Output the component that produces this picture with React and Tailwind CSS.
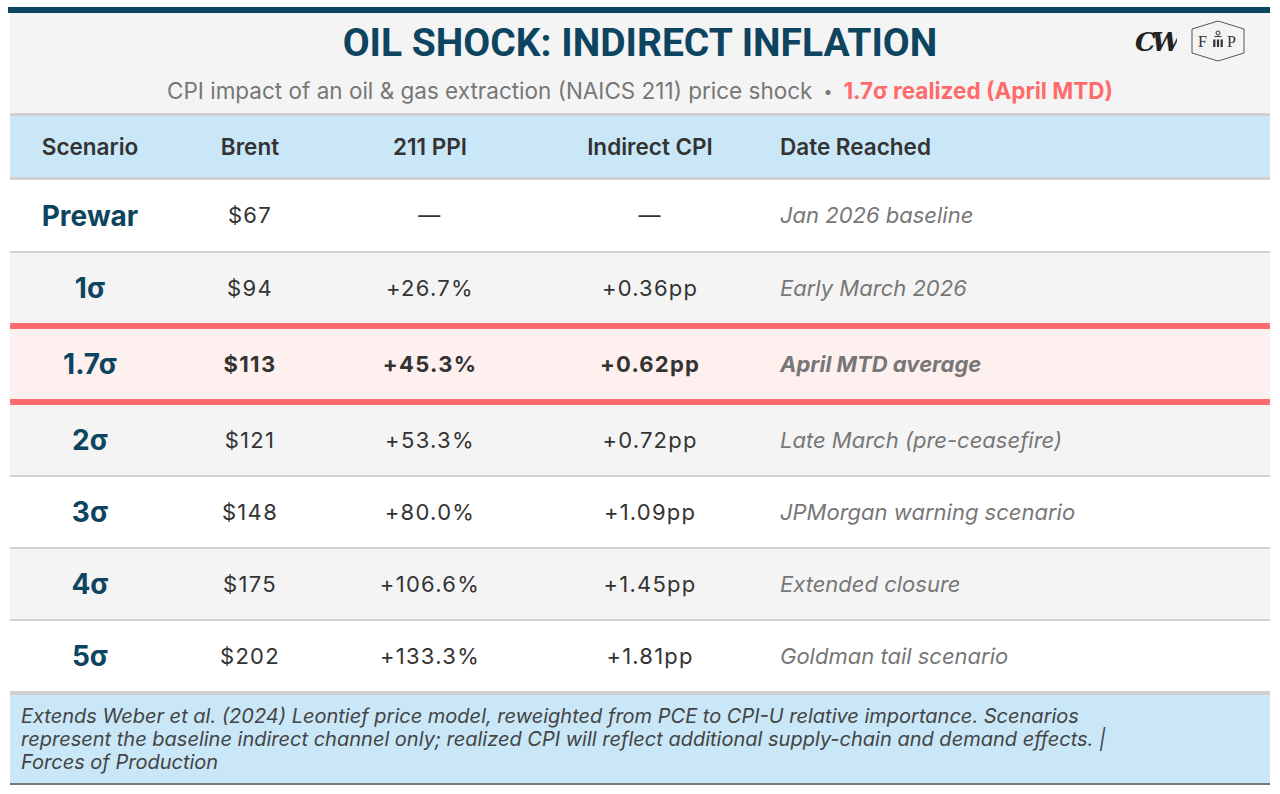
import React from 'react'

const rows = [
  { s: 'Prewar', b: '$67', p: '—', c: '—', d: 'Jan 2026 baseline', box: 'h-[73px] bg-white border-b-2 border-[#d0d0d0]' },
  { s: '1σ', b: '$94', p: '+26.7%', c: '+0.36pp', d: 'Early March 2026', box: 'h-[70px] bg-[#f4f4f4]' },
  { s: '1.7σ', b: '$113', p: '+45.3%', c: '+0.62pp', d: 'April MTD average', box: 'h-[82px] bg-[#fff0f0] border-y-[6px] border-[#ff6b6b] font-bold' },
  { s: '2σ', b: '$121', p: '+53.3%', c: '+0.72pp', d: 'Late March (pre-ceasefire)', box: 'h-[72px] bg-[#f4f4f4] border-b-2 border-[#d0d0d0]' },
  { s: '3σ', b: '$148', p: '+80.0%', c: '+1.09pp', d: 'JPMorgan warning scenario', box: 'h-[72px] bg-white border-b-2 border-[#d0d0d0]' },
  { s: '4σ', b: '$175', p: '+106.6%', c: '+1.45pp', d: 'Extended closure', box: 'h-[72px] bg-[#f4f4f4] border-b-2 border-[#d0d0d0]' },
  { s: '5σ', b: '$202', p: '+133.3%', c: '+1.81pp', d: 'Goldman tail scenario', box: 'h-[70px] bg-white' },
]

const cols = 'grid grid-cols-[160px_160px_200px_240px_1fr] items-center'

const CwLogo = () => (
  <svg width="42" height="30" viewBox="0 0 42 30">
    <text x="0" y="25" fontFamily="'DejaVu Serif', serif" fontWeight="900" fontStyle="italic" fontSize="26" fill="#222" letterSpacing="-4">CW</text>
  </svg>
)

const FopLogo = () => (
  <svg width="56" height="42" viewBox="0 0 56 42">
    <polygon points="2,9 28,1 54,9 54,33 28,41 2,33" fill="none" stroke="#555" strokeWidth="1" />
    <text x="8" y="27" fontFamily="'Liberation Serif', serif" fontSize="16" fill="#333">F</text>
    <text x="37" y="27" fontFamily="'Liberation Serif', serif" fontSize="16" fill="#333">P</text>
    <circle cx="28" cy="13" r="2" fill="none" stroke="#333" strokeWidth="1" />
    <line x1="24.5" y1="16.5" x2="31.5" y2="16.5" stroke="#333" strokeWidth="1" />
    <rect x="23.2" y="19.5" width="2.2" height="7.5" fill="#333" />
    <rect x="26.9" y="19.5" width="2.2" height="7.5" fill="#333" />
    <rect x="30.6" y="19.5" width="2.2" height="7.5" fill="#333" />
  </svg>
)

export default function App() {
  return (
    <div className="bg-white w-[1280px] h-[794px] pt-[7px] px-[10px] font-['Inter',sans-serif]">
      <div className="h-[6px] bg-[#0d4460] -ml-[2px]" />
      <div className="relative h-[103px] bg-[#f4f4f4] border-b-[3px] border-[#d0d0d0] flex flex-col items-center">
        <h1 className="mt-[9px] font-['Roboto',sans-serif] text-[39px] leading-[42px] font-bold text-[#0d4460]">OIL SHOCK: INDIRECT INFLATION</h1>
        <p className="mt-[13px] text-[22.5px] leading-[27px] text-[#777]">
          CPI impact of an oil &amp; gas extraction (NAICS 211) price shock
          <span className="mx-[11px] text-[16px] align-[2px]">•</span>
          <span className="text-[#ff6b6b] font-bold">1.7σ realized (April MTD)</span>
        </p>
        <div className="absolute right-[24px] top-[7px] flex items-center gap-[13px]">
          <CwLogo />
          <FopLogo />
        </div>
      </div>

      <div className={`${cols} h-[64px] bg-[#c9e7f7] border-b-[3px] border-[#d0d0d0] text-[22.5px] font-semibold text-[#333]`}>
        <div className="text-center">Scenario</div>
        <div className="text-center">Brent</div>
        <div className="text-center">211 PPI</div>
        <div className="text-center">Indirect CPI</div>
        <div className="pl-[10px]">Date Reached</div>
      </div>

      {rows.map((r) => (
        <div key={r.s} className={`${cols} ${r.box} text-[22px] text-[#333]`}>
          <div className="text-center text-[28px] font-bold text-[#0d4460]">{r.s}</div>
          <div className="text-center tracking-[1.3px]">{r.b}</div>
          <div className="text-center tracking-[1.3px]">{r.p}</div>
          <div className="text-center tracking-[1.2px]">{r.c}</div>
          <div className="pl-[10px] italic text-[#777]">{r.d}</div>
        </div>
      ))}

      <div className="border-t-4 border-[#d0d0d0] bg-[#c9e7f7] border-b-2 border-b-[#777] h-[94px] px-[11px] pt-[10px] text-[20px] leading-[23px] italic text-[#444]">
        <p className="max-w-[1110px]">
          Extends Weber et al. (2024) Leontief price model, reweighted from PCE to CPI-U relative importance. Scenarios represent the baseline indirect channel only; realized CPI will reflect additional supply-chain and demand effects. | Forces of Production
        </p>
      </div>
    </div>
  )
}
